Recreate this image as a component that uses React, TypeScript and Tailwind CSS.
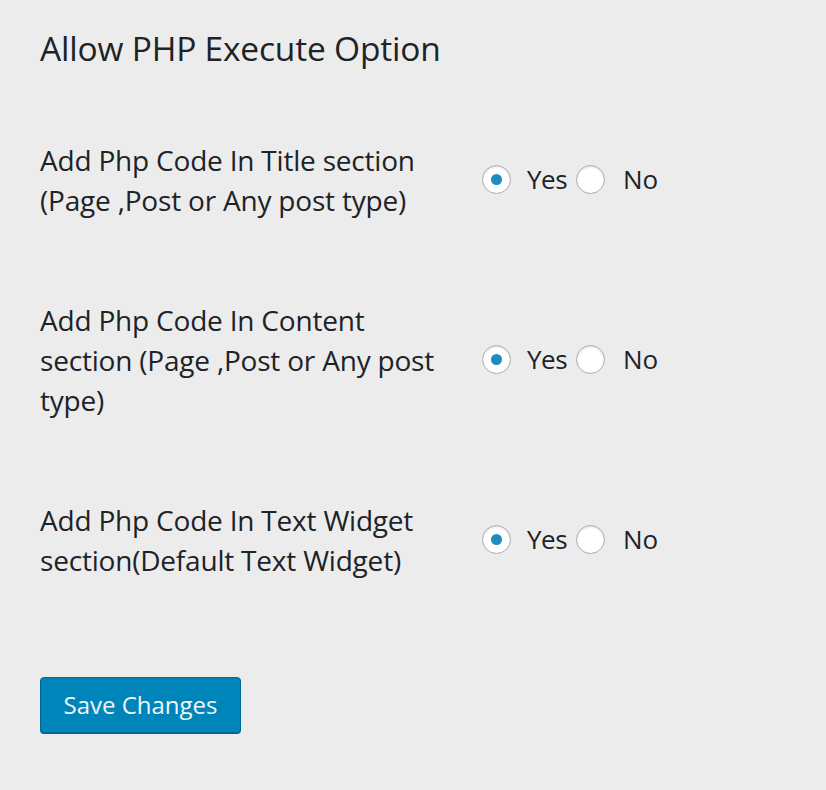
import { useState } from "react";

type Row = { id: string; lines: string[] };

const rows: Row[] = [
  { id: "title", lines: ["Add Php Code In Title section", "(Page ,Post or Any post type)"] },
  { id: "content", lines: ["Add Php Code In Content", "section (Page ,Post or Any post", "type)"] },
  { id: "widget", lines: ["Add Php Code In Text Widget", "section(Default Text Widget)"] },
];

function Radio({ checked, onClick }: { checked: boolean; onClick: () => void }) {
  return (
    <button
      type="button"
      onClick={onClick}
      className="flex h-[29px] w-[29px] items-center justify-center rounded-full border border-[#a9aeb3] bg-white shadow-[inset_0_1px_2px_rgba(0,0,0,0.15)]"
    >
      {checked && <span className="h-[11px] w-[11px] rounded-full bg-[#1e8cbe]" />}
    </button>
  );
}

export default function App() {
  const [values, setValues] = useState<Record<string, "yes" | "no">>({
    title: "yes",
    content: "yes",
    widget: "yes",
  });

  return (
    <div
      className="min-h-[790px] w-[826px] bg-[#ececec] px-10 pt-[28px] text-[#1d2327]"
      style={{ fontFamily: '"Open Sans", "Noto Sans", sans-serif' }}
    >
      <h2 className="text-[33.5px] leading-[40px] tracking-[-0.2px]">Allow PHP Execute Option</h2>

      <div className="mt-[72px] flex flex-col gap-[80px]">
        {rows.map((r) => (
          <div key={r.id} className="flex items-center">
            <div className="w-[442px] shrink-0 text-[28px] leading-[40px] tracking-[-0.2px]">
              {r.lines.map((l) => (
                <div key={l} className="whitespace-nowrap">{l}</div>
              ))}
            </div>
            <div className="-mt-[2px] flex items-center text-[26px] leading-[40px]">
              <Radio
                checked={values[r.id] === "yes"}
                onClick={() => setValues((v) => ({ ...v, [r.id]: "yes" }))}
              />
              <span className="ml-[16px] mr-[9px] tracking-[-0.5px]">Yes</span>
              <Radio
                checked={values[r.id] === "no"}
                onClick={() => setValues((v) => ({ ...v, [r.id]: "no" }))}
              />
              <span className="ml-[18px]">No</span>
            </div>
          </div>
        ))}
      </div>

      <button
        type="button"
        className="mt-[97px] h-[56px] w-[201px] rounded-[4px] border border-[#006799] bg-[#0085ba] text-[24px] text-[#f1f6f8] shadow-[0_1px_0_#006799]"
      >
        Save Changes
      </button>
    </div>
  );
}
